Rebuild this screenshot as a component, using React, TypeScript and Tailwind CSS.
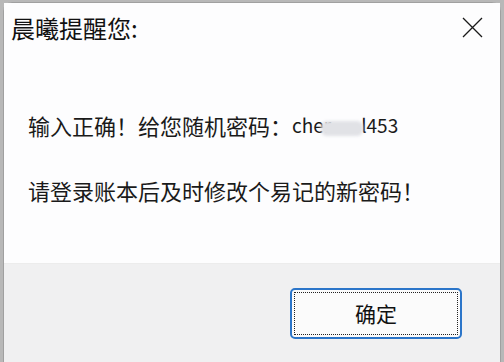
import React from "react";

const font = { fontFamily: '"Noto Sans CJK SC", "Noto Sans", sans-serif' };

function CloseIcon() {
  return (
    <svg width="21" height="21" viewBox="0 0 21 21" fill="none">
      <path d="M1 1L20 20M20 1L1 20" stroke="#1a1a1a" strokeWidth="1.3" />
    </svg>
  );
}

export default function App() {
  return (
    <div className="w-[504px] h-[362px] overflow-hidden bg-[#b8b8b8] pt-[2px] pl-[3px] pr-[3px]" style={font}>
      <div className="flex h-[380px] flex-col rounded-t-[9px] border border-[#a0a0a0] bg-white">
        {/* 内容区 */}
        <div className="h-[260px] bg-[#fdfdfe]">
          <div className="flex items-start justify-between pl-[7px] pr-[17px] pt-[13px]">
            <h1 className="text-[24px] leading-[24px] text-[#111]">晨曦提醒您:</h1>
            <div className="mt-[1px]">
              <CloseIcon />
            </div>
          </div>
          <div className="pl-[24px] pt-[74px] text-[22px] leading-[22px] text-[#1a1a1a]">
            <p className="flex items-center">
              输入正确！给您随机密码：
              <span className="text-[19px]">cher</span>
              <span className="-ml-[10px] inline-block h-[15px] w-[42px] translate-y-[3px] rounded-[6px] bg-[#e1e2e6] blur-[1.5px]" />
              <span className="-ml-[2px] text-[19px]">l453</span>
            </p>
            <p className="mt-[43px]">请登录账本后及时修改个易记的新密码！</p>
          </div>
        </div>
        {/* 按钮区 */}
        <div className="flex flex-1 justify-end border-t border-[#ececec] bg-[#f0f0f1] pr-[38px] pt-[24px]">
          <button className="h-[51px] w-[172px] rounded-[5px] border-2 border-[#2b75c9] bg-[#fbfbfb] p-[2px]">
            <div className="flex h-full w-full items-center justify-center border border-dotted border-[#222] text-[21px] text-[#111]">
              确定
            </div>
          </button>
        </div>
      </div>
    </div>
  );
}
